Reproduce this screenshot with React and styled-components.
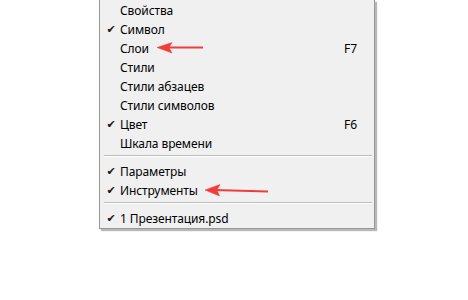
import React from "react";
import styled, { createGlobalStyle } from "styled-components";

const Global = createGlobalStyle`
  html, body { margin: 0; padding: 0; background: #ffffff; }
  body { font-family: "Noto Sans", "Open Sans", sans-serif; }
`;

const Page = styled.div`
  position: relative;
  width: 468px;
  height: 300px;
  background: #ffffff;
  overflow: hidden;
`;

const Menu = styled.div`
  margin-left: 99px;
  width: 274px;
  background: #f0f0f0;
  border: 1px solid #979797;
  border-top: none;
  box-shadow: 2px 2px 1px rgba(0, 0, 0, 0.28);
  padding: 1px 0 0 0;
  display: flex;
  flex-direction: column;
`;

const Row = styled.div`
  display: grid;
  grid-template-columns: 20px 1fr 30px;
  align-items: center;
  height: 19px;
  font-size: 12px;
  color: #000000;
  line-height: 19px;
`;

const Check = styled.span`
  display: flex;
  justify-content: center;
  padding-left: 2px;
  font-size: 11px;
  color: #1a1a1a;
  font-family: "DejaVu Sans", sans-serif;
`;

const Label = styled.span`
  white-space: nowrap;
  letter-spacing: -0.1px;
`;

const Shortcut = styled.span`
  white-space: nowrap;
`;

const Separator = styled.div`
  height: 9px;
  display: flex;
  flex-direction: column;
  padding: 2px 2px 0 4px;
  box-sizing: border-box;
  &::before {
    content: "";
    display: block;
    border-top: 1px solid #bcbcbc;
    border-bottom: 1px solid #ffffff;
  }
`;

const Arrow = styled.svg`
  position: absolute;
  left: 0;
  top: 0;
  pointer-events: none;
`;

const groups = [
  [
    { label: "Свойства" },
    { label: "Символ", checked: true },
    { label: "Слои", shortcut: "F7" },
    { label: "Стили" },
    { label: "Стили абзацев" },
    { label: "Стили символов" },
    { label: "Цвет", checked: true, shortcut: "F6" },
    { label: "Шкала времени" },
  ],
  [
    { label: "Параметры", checked: true },
    { label: "Инструменты", checked: true },
  ],
  [{ label: "1 Презентация.psd", checked: true }],
];

export default function App() {
  return (
    <Page>
      <Global />
      <Menu>
        {groups.map((g, gi) => (
          <React.Fragment key={gi}>
            {gi > 0 && <Separator />}
            {g.map((it) => (
              <Row key={it.label}>
                <Check>{it.checked ? "✔" : ""}</Check>
                <Label>{it.label}</Label>
                <Shortcut>{it.shortcut || ""}</Shortcut>
              </Row>
            ))}
          </React.Fragment>
        ))}
      </Menu>
      <Arrow width="468" height="300" viewBox="0 0 468 300">
        <g fill="#f23b3b" stroke="#f23b3b">
          <line x1="203" y1="47.5" x2="166" y2="47.5" strokeWidth="2" />
          <path d="M157 47.5 L172 42.5 L169 47.5 L172 53 Z" strokeWidth="0.5" />
          <line x1="268" y1="191.5" x2="214" y2="190" strokeWidth="2" />
          <path d="M205 190 L220 184.5 L217 190 L219.5 196 Z" strokeWidth="0.5" />
        </g>
      </Arrow>
    </Page>
  );
}
